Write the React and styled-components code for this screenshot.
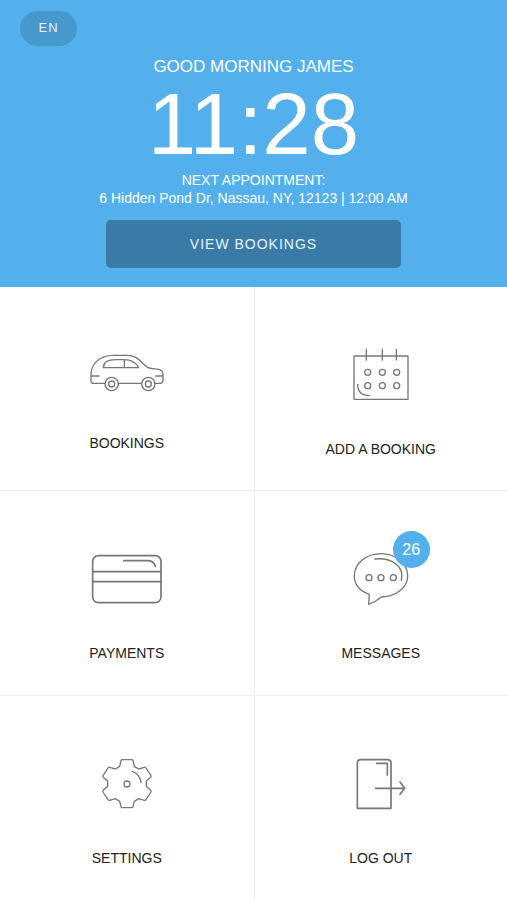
import React from "react";
import styled, { createGlobalStyle } from "styled-components";

const GlobalStyle = createGlobalStyle`
  * {
    box-sizing: border-box;
  }
  body {
    margin: 0;
    background: #fff;
    font-family: "Liberation Sans", Arial, Helvetica, sans-serif;
  }
`;

const Page = styled.div`
  display: flex;
  flex-direction: column;
  min-height: 100vh;
`;

const Header = styled.header`
  display: flex;
  flex-direction: column;
  align-items: center;
  padding: 11px 20px 19px;
  background: #53b0ed;
  color: #fff;
  text-align: center;
`;

const LanguageButton = styled.button`
  align-self: flex-start;
  width: 57px;
  height: 35px;
  padding: 0 0 2px;
  border: none;
  border-radius: 18px;
  background: #4798cd;
  color: #e6f4fd;
  font-family: inherit;
  font-size: 13px;
  letter-spacing: 1px;
  cursor: pointer;
`;

const Greeting = styled.h1`
  margin: 11px 0 3px;
  font-size: 17px;
  font-weight: 400;
  line-height: 20px;
`;

const Clock = styled.time`
  font-size: 87px;
  line-height: 88px;
`;

const Appointment = styled.p`
  margin: 3px 0 13px;
  font-size: 14px;
  line-height: 18px;
`;

const ViewButton = styled.button`
  width: 63%;
  height: 48px;
  border: none;
  border-radius: 5px;
  background: #3a7aa7;
  color: #e6f4fd;
  font-family: inherit;
  font-size: 14px;
  letter-spacing: 1px;
  cursor: pointer;
`;

const Menu = styled.nav`
  flex: 1;
  display: grid;
  grid-template-columns: 1fr 1fr;
  grid-auto-rows: 1fr;
`;

const Tile = styled.a`
  display: flex;
  flex-direction: column;
  align-items: center;
  justify-content: center;
  gap: 39px;
  padding-top: 28px;
  border-bottom: 1px solid #eee;
  color: #222;
  font-size: 14px;
  line-height: 16px;
  text-decoration: none;
  &:nth-child(even) {
    border-left: 1px solid #eee;
  }
  &:nth-last-child(-n + 2) {
    border-bottom: none;
  }
`;

const IconWrapper = styled.span`
  position: relative;
  display: flex;
`;

const Badge = styled.span`
  position: absolute;
  top: -21px;
  left: 40px;
  display: flex;
  align-items: center;
  justify-content: center;
  width: 37px;
  height: 37px;
  border-radius: 50%;
  background: #53b0ed;
  color: #fff;
  font-size: 16px;
`;

const Icon = styled.svg`
  display: block;
  fill: none;
  stroke: #777;
  stroke-width: ${(props) => props.$stroke || 4};
  stroke-linecap: round;
  stroke-linejoin: round;
`;

const CarIcon = () => (
  <Icon width="76" height="42" viewBox="26 39 228 126" aria-hidden="true">
    <path d="M74 127H40Q32 127 32 119V101C32 72 54 43 100 43H140C174 43 182 66 202 79C212 85 226 82 238 86Q248 90 248 102V117Q248 127 239 127H224" />
    <path d="M114 127H184" />
    <path d="M69 80H175C166 64 152 56 132 56H106C84 56 69 64 69 80ZM132 56V80" />
    <path d="M34 105H56M226 105H246" />
    <circle cx="94" cy="129" r="20" />
    <circle cx="94" cy="129" r="9" />
    <circle cx="204" cy="129" r="20" />
    <circle cx="204" cy="129" r="9" />
  </Icon>
);

const CalendarIcon = () => (
  <Icon width="58" height="54" viewBox="51 39 174 162" aria-hidden="true">
    <path d="M57 63H219V193H57Z" />
    <path d="M94 43V75M142 43V75M184 43V75" />
    <path d="M68 148C68 172 80 182 103 182" />
    {[112, 152].map((y) =>
      [98, 142, 185].map((x) => (
        <circle key={`${x}-${y}`} cx={x} cy={y} r="9" />
      ))
    )}
  </Icon>
);

const CardIcon = () => (
  <Icon
    width="72"
    height="54"
    viewBox="34 24 216 162"
    $stroke={5}
    aria-hidden="true"
  >
    <rect x="39" y="35" width="205" height="141" rx="17" />
    <path d="M39 83H244M39 113H244" />
    <path d="M132 50H206Q223 51 227 67" />
  </Icon>
);

const MessageIcon = () => (
  <Icon width="56" height="54" viewBox="39 84 168 162" aria-hidden="true">
    <path d="M88 211C60 201 43 182 43 156C43 118 79 89 123 89C167 89 203 118 203 156C203 190 170 217 124 219Q108 233 86 241Z" />
    <path d="M104 105C156 100 194 127 184 169" />
    <circle cx="87" cy="161" r="9" />
    <circle cx="123" cy="161" r="9" />
    <circle cx="160" cy="161" r="9" />
  </Icon>
);

const GearIcon = () => (
  <Icon width="52" height="54" viewBox="33 26 156 162" aria-hidden="true">
    <path d="M97 34H125Q128 34 129 37L133 54L146 62L163 57Q166 56 168 59L183 82Q184 85 182 87L169 98V114L182 126Q184 128 183 131L168 154Q166 157 163 156L146 151L133 159L129 175Q128 178 125 178H97Q94 178 93 175L89 159L76 151L59 156Q56 157 54 154L39 131Q38 128 40 126L53 114V98L40 87Q38 85 39 82L54 59Q56 56 59 57L76 62L89 54L93 37Q94 34 97 34Z" />
    <path d="M127 69Q151 78 153 103" />
    <circle cx="111" cy="107" r="9" />
  </Icon>
);

const LogoutIcon = () => (
  <Icon
    width="50"
    height="54"
    viewBox="33 24 150 162"
    $stroke={5}
    aria-hidden="true"
  >
    <path d="M37 178V42Q37 32 48 32H127Q138 32 138 42V178Z" />
    <path d="M95 43H127V78" />
    <path d="M91 118H178M165 99L179 118L165 136" />
  </Icon>
);

const menuItems = [
  { label: "BOOKINGS", icon: CarIcon },
  { label: "ADD A BOOKING", icon: CalendarIcon },
  { label: "PAYMENTS", icon: CardIcon },
  { label: "MESSAGES", icon: MessageIcon, count: 26 },
  { label: "SETTINGS", icon: GearIcon },
  { label: "LOG OUT", icon: LogoutIcon },
];

const App = () => {
  return (
    <>
      <GlobalStyle />
      <Page>
        <Header>
          <LanguageButton type="button">EN</LanguageButton>
          <Greeting>GOOD MORNING JAMES</Greeting>
          <Clock>11:28</Clock>
          <Appointment>
            NEXT APPOINTMENT:
            <br />6 Hidden Pond Dr, Nassau, NY, 12123 | 12:00 AM
          </Appointment>
          <ViewButton type="button">VIEW BOOKINGS</ViewButton>
        </Header>
        <Menu>
          {menuItems.map(({ label, icon: MenuIcon, count }) => (
            <Tile key={label} href="#">
              <IconWrapper>
                <MenuIcon />
                {count && <Badge>{count}</Badge>}
              </IconWrapper>
              <span>{label}</span>
            </Tile>
          ))}
        </Menu>
      </Page>
    </>
  );
};

export default App;
